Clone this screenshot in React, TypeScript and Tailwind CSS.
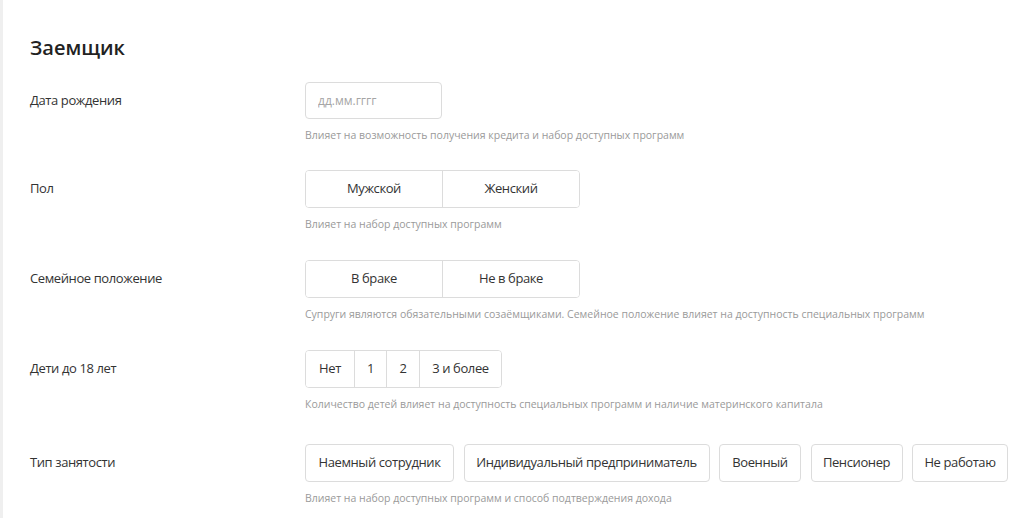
import { useState } from "react";

const font = { fontFamily: '"Open Sans", "Liberation Sans", sans-serif' };

function Row({ label, hint, className = "", children }: { label: string; hint: string; className?: string; children: React.ReactNode }) {
  return (
    <div className={`flex ${className}`}>
      <div className="w-[275px] shrink-0 text-[13px] tracking-[-0.4px] text-[#333] h-[38px] flex items-center">{label}</div>
      <div className="flex flex-col">
        {children}
        <p className="mt-[9px] text-[10.5px] leading-[14px] text-[#9a9a9a]">{hint}</p>
      </div>
    </div>
  );
}

function Segmented({ items, widths, value, onChange }: { items: string[]; widths: string[]; value: string | null; onChange: (v: string) => void }) {
  return (
    <div className="flex h-[38px] rounded-[4px] border border-[#dcdcdc] overflow-hidden self-start">
      {items.map((it, i) => (
        <button
          key={it}
          onClick={() => onChange(it)}
          className={`${widths[i]} h-full flex items-center justify-center text-[13px] tracking-[-0.4px] text-[#333] ${i > 0 ? "border-l border-[#dcdcdc]" : ""} ${value === it ? "bg-[#f3f3f3]" : "bg-white"}`}
        >
          {it}
        </button>
      ))}
    </div>
  );
}

export default function App() {
  const [gender, setGender] = useState<string | null>(null);
  const [married, setMarried] = useState<string | null>(null);
  const [kids, setKids] = useState<string | null>(null);
  const [job, setJob] = useState<string | null>(null);

  const jobs = [
    { t: "Наемный сотрудник", w: "w-[149px]" },
    { t: "Индивидуальный предприниматель", w: "w-[246px]" },
    { t: "Военный", w: "w-[82px]" },
    { t: "Пенсионер", w: "w-[92px]" },
    { t: "Не работаю", w: "w-[96px]" },
  ];

  return (
    <div style={font} className="min-h-[518px] bg-white border-l-[3px] border-[#efefef]">
      <div className="pl-[27px] pt-[34px]">
        <h1 className="text-[20px] leading-[28px] font-semibold text-[#222]">Заемщик</h1>

        <div className="flex flex-col">
          <Row className="mt-[20px]" label="Дата рождения" hint="Влияет на возможность получения кредита и набор доступных программ">
            <input
              placeholder="дд.мм.гггг"
              className="w-[137px] h-[37px] rounded-[4px] border border-[#dcdcdc] px-[12px] text-[12px] text-[#333] placeholder:text-[#a5a5a5] outline-none"
            />
          </Row>

          <Row className="mt-[28px]" label="Пол" hint="Влияет на набор доступных программ">
            <Segmented items={["Мужской", "Женский"]} widths={["w-[136px]", "w-[137px]"]} value={gender} onChange={setGender} />
          </Row>

          <Row className="mt-[29px]" label="Семейное положение" hint="Супруги являются обязательными созаёмщиками. Семейное положение влияет на доступность специальных программ">
            <Segmented items={["В браке", "Не в браке"]} widths={["w-[136px]", "w-[137px]"]} value={married} onChange={setMarried} />
          </Row>

          <Row className="mt-[29px]" label="Дети до 18 лет" hint="Количество детей влияет на доступность специальных программ и наличие материнского капитала">
            <Segmented items={["Нет", "1", "2", "3 и более"]} widths={["w-[48px]", "w-[32px]", "w-[33px]", "w-[82px]"]} value={kids} onChange={setKids} />
          </Row>

          <Row className="mt-[33px]" label="Тип занятости" hint="Влияет на набор доступных программ и способ подтверждения дохода">
            <div className="flex gap-[9.5px]">
              {jobs.map(j => (
                <button
                  key={j.t}
                  onClick={() => setJob(j.t)}
                  className={`${j.w} h-[38px] rounded-[4px] border border-[#dcdcdc] text-[13px] tracking-[-0.4px] text-[#333] whitespace-nowrap ${job === j.t ? "bg-[#f3f3f3]" : "bg-white"}`}
                >
                  {j.t}
                </button>
              ))}
            </div>
          </Row>
        </div>
      </div>
    </div>
  );
}
